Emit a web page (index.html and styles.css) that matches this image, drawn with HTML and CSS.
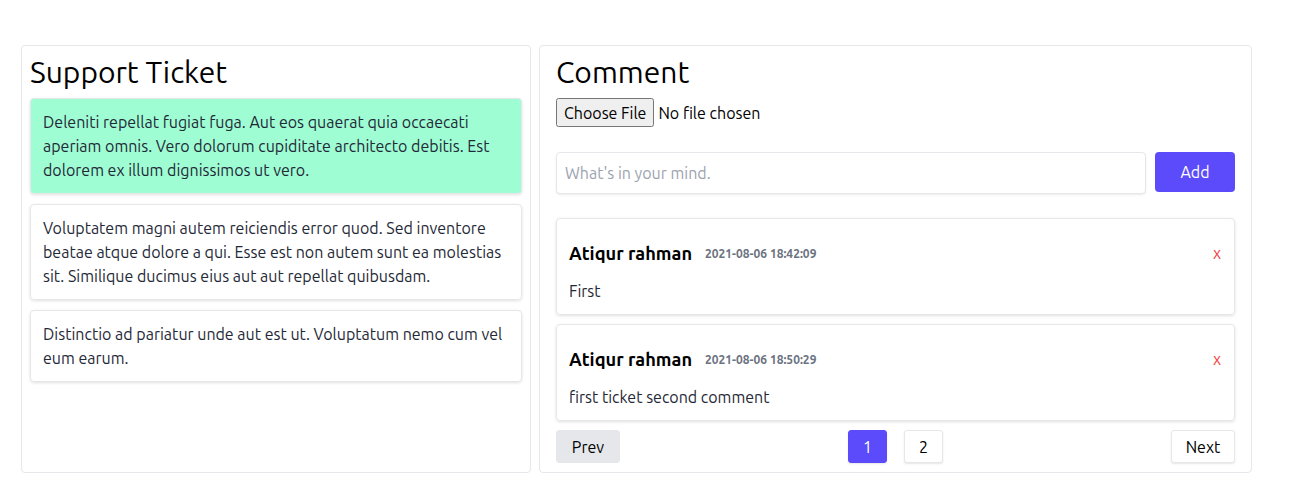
FILE: index.html
```html
<!DOCTYPE html>
<html>
<head>
<meta charset="utf-8">
<link rel="stylesheet" href="styles.css">
</head>
<body>
<div class="page">
  <section class="panel tickets">
    <h1 class="title">Support Ticket</h1>
    <div class="ticket active">Deleniti repellat fugiat fuga. Aut eos quaerat quia occaecati aperiam omnis. Vero dolorum cupiditate architecto debitis. Est dolorem ex illum dignissimos ut vero.</div>
    <div class="ticket">Voluptatem magni autem reiciendis error quod. Sed inventore beatae atque dolore a qui. Esse est non autem sunt ea molestias sit. Similique ducimus eius aut aut repellat quibusdam.</div>
    <div class="ticket">Distinctio ad pariatur unde aut est ut. Voluptatum nemo cum vel eum earum.</div>
  </section>
  <section class="panel comments">
    <h1 class="title">Comment</h1>
    <input class="file" type="file">
    <div class="form">
      <input class="text" type="text" placeholder="What's in your mind.">
      <button class="add">Add</button>
    </div>
    <div class="list">
      <div class="comment">
        <div class="head">
          <span class="name">Atiqur rahman</span>
          <span class="date">2021-08-06 18:42:09</span>
          <span class="del">x</span>
        </div>
        <p class="body">First</p>
      </div>
      <div class="comment">
        <div class="head">
          <span class="name">Atiqur rahman</span>
          <span class="date">2021-08-06 18:50:29</span>
          <span class="del">x</span>
        </div>
        <p class="body">first ticket second comment</p>
      </div>
    </div>
    <div class="pager">
      <button class="pbtn prev">Prev</button>
      <div class="pages">
        <button class="pbtn num current">1</button>
        <button class="pbtn num">2</button>
      </div>
      <button class="pbtn next">Next</button>
    </div>
  </section>
</div>
</body>
</html>
```
FILE: styles.css
```css
* { box-sizing: border-box; }
html, body { margin: 0; padding: 0; background: #fff; }
body {
  font-family: "Ubuntu", "Lato", "Noto Sans", sans-serif;
  color: #1f2937;
  font-size: 16px;
}
.page {
  display: flex;
  gap: 8px;
  padding: 45px 0 0 21px;
  align-items: stretch;
}
.panel {
  border: 1px solid #e5e7eb;
  border-radius: 4px;
  height: 428px;
}
.tickets { width: 510px; padding: 8px 8px; }
.comments { width: 713px; padding: 8px 16px; }
.title {
  margin: 0 0 8px;
  font-size: 30px;
  font-weight: 400;
  line-height: 36px;
  height: 36px;
  color: #000;
}
.ticket {
  border: 1px solid #e5e7eb;
  border-radius: 4px;
  box-shadow: 0 1px 3px rgba(0,0,0,0.12);
  padding: 11px 12px;
  line-height: 24px;
  margin-bottom: 10px;
  color: #1f2937;
  font-size: 16px;
}
.ticket.active { background: #9ffdd4; }
.file {
  font-family: inherit;
  font-size: 16px;
  color: #000;
  display: block;
  height: 29px;
}
.file::file-selector-button {
  font-family: inherit;
  font-size: 16px;
  height: 29px;
}
.form {
  display: flex;
  align-items: flex-start;
  gap: 9px;
  margin-top: 25px;
}
.text {
  flex: 1;
  height: 42px;
  border: 1px solid #e5e7eb;
  border-radius: 4px;
  box-shadow: 0 1px 2px rgba(0,0,0,0.08);
  padding: 0 8px;
  font-family: inherit;
  font-size: 16px;
  color: #1f2937;
}
.text::placeholder { color: #9ca3af; }
.add {
  width: 80px;
  height: 40px;
  border: 0;
  border-radius: 4px;
  background: #5b4bfa;
  color: #fff;
  font-family: inherit;
  font-size: 16px;
}
.list { margin-top: 24px; display: flex; flex-direction: column; gap: 9px; }
.comment {
  border: 1px solid #e5e7eb;
  border-radius: 4px;
  box-shadow: 0 1px 3px rgba(0,0,0,0.12);
  padding: 22px 12px 12px;
  height: 97px;
}
.head { display: flex; align-items: center; height: 24px; }
.name { font-weight: 700; font-size: 18.2px; color: #000; }
.date { font-weight: 700; font-size: 12px; color: #6b7280; margin-left: 13px; }
.del { margin-left: auto; color: #ef4444; font-size: 16px; margin-right: 1px; }
.body { margin: 14px 0 0; line-height: 24px; color: #1f2937; }
.pager {
  display: flex;
  align-items: center;
  justify-content: space-between;
  margin-top: 9px;
}
.pbtn {
  font-family: inherit;
  font-size: 16px;
  height: 33px;
  border-radius: 3px;
  border: 1px solid #e5e7eb;
  background: #fff;
  color: #000;
  box-shadow: 0 1px 2px rgba(0,0,0,0.1);
}
.prev { width: 64px; background: #e5e7eb; border-color: #e5e7eb; box-shadow: none; }
.next { width: 64px; }
.pages { display: flex; gap: 17px; }
.num { width: 39px; }
.num.current { background: #5b4bfa; border-color: #5b4bfa; color: #fff; }
```
